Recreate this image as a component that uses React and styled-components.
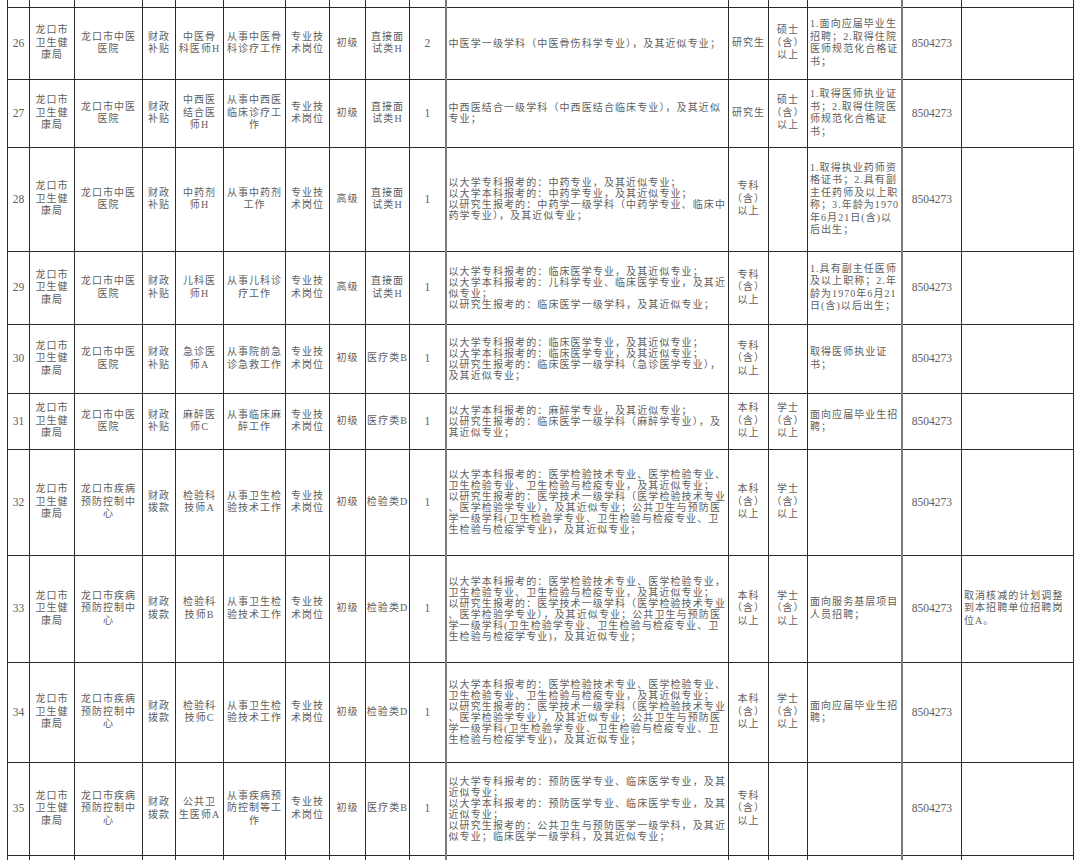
import React from 'react';
import styled, { createGlobalStyle } from 'styled-components';

const Global = createGlobalStyle`
  html, body {
    margin: 0;
    padding: 0;
    background: #fff;
    height: 860px;
    overflow: hidden;
  }
  body {
    font-family: "Liberation Serif", "Noto Sans CJK SC", serif;
  }
`;

const Page = styled.div`
  padding: 0 7px;
`;

const Table = styled.table`
  border-collapse: collapse;
  table-layout: fixed;
  width: 1066px;
  color: #5e5e5e;
  font-family: "Liberation Serif", "Noto Sans CJK SC", serif;
  font-size: 10px;
`;

const Col = styled.col`
  width: ${(p) => p.$w}px;
`;

const Row = styled.tr`
  height: ${(p) => p.$h}px;
`;

const Cell = styled.td`
  border: 1px solid #2b2b2b;
  ${(p) => p.$heavy && 'border-left: 2px solid #7a7a7a;'}
  ${(p) => p.$stubTop && 'border-top: none;'}
  ${(p) => p.$stubBottom && 'border-bottom: none;'}
  padding: 0 ${(p) => p.$pad || 0}px;
  text-align: ${(p) => p.$align || 'center'};
  vertical-align: middle;
  white-space: pre;
  overflow: hidden;
  line-height: ${(p) => p.$lh || 12.5}px;
  letter-spacing: ${(p) => (p.$num ? 0 : p.$ls || 1.05)}px;
  font-size: ${(p) => (p.$num ? 11.5 : 10)}px;
`;

const columns = [
  { key: 'n', w: 22, num: true },
  { key: 'dept', w: 45 },
  { key: 'unit', w: 68 },
  { key: 'fund', w: 33 },
  { key: 'post', w: 48 },
  { key: 'desc', w: 62 },
  { key: 'type', w: 44 },
  { key: 'level', w: 36 },
  { key: 'cat', w: 44 },
  { key: 'count', w: 36, num: true },
  { key: 'major', w: 283, align: 'left', pad: 2, lh: 11, ls: 1.1, heavy: true },
  { key: 'edu', w: 40 },
  { key: 'degree', w: 39 },
  { key: 'other', w: 94, align: 'left', pad: 2 },
  { key: 'phone', w: 60, num: true, heavy: true },
  { key: 'note', w: 112, align: 'left', pad: 2 },
];

const DEPT = '龙口市\n卫生健\n康局';
const ZY = '龙口市中医\n医院';
const JK = '龙口市疾病\n预防控制中\n心';
const BT = '财政\n补贴';
const BK = '财政\n拨款';
const ZJ = '专业技\n术岗位';
const ZK = '专科\n（含）\n以上';
const BKE = '本科\n（含）\n以上';
const XS = '学士\n（含）\n以上';
const SS = '硕士\n（含）\n以上';
const TEL = '8504273';

const jy = (sep) =>
  [
    `以大学本科报考的：医学检验技术专业、医学检验专业${sep}`,
    '卫生检验专业、卫生检验与检疫专业，及其近似专业；',
    '以研究生报考的：医学技术一级学科（医学检验技术专业',
    '、医学检验学专业），及其近似专业；公共卫生与预防医',
    '学一级学科(卫生检验学专业、卫生检验与检疫专业、卫',
    '生检验与检疫学专业)，及其近似专业；',
  ].join('\n');

const rows = [
  {
    h: 72, n: '26', dept: DEPT, unit: ZY, fund: BT, post: '中医骨\n科医师H', desc: '从事中医骨\n科诊疗工作',
    type: ZJ, level: '初级', cat: '直接面\n试类H', count: '2',
    major: '中医学一级学科（中医骨伤科学专业），及其近似专业；',
    edu: '研究生', degree: SS,
    other: '1.面向应届毕业生\n招聘；2.取得住院\n医师规范化合格证\n书；', phone: TEL, note: '',
  },
  {
    h: 68, n: '27', dept: DEPT, unit: ZY, fund: BT, post: '中西医\n结合医\n师H', desc: '从事中西医\n临床诊疗工\n作',
    type: ZJ, level: '初级', cat: '直接面\n试类H', count: '1',
    major: '中西医结合一级学科（中西医结合临床专业），及其近似\n专业；',
    edu: '研究生', degree: SS,
    other: '1.取得医师执业证\n书；2.取得住院医\n师规范化合格证\n书；', phone: TEL, note: '',
  },
  {
    h: 104, n: '28', dept: DEPT, unit: ZY, fund: BT, post: '中药剂\n师H', desc: '从事中药剂\n工作',
    type: ZJ, level: '高级', cat: '直接面\n试类H', count: '1',
    major:
      '以大学专科报考的：中药专业，及其近似专业；\n以大学本科报考的：中药学专业，及其近似专业；\n以研究生报考的：中药学一级学科（中药学专业、临床中\n药学专业），及其近似专业；',
    edu: ZK, degree: '',
    other: '1.取得执业药师资\n格证书；2.具有副\n主任药师及以上职\n称；3.年龄为1970\n年6月21日(含)以\n后出生；', phone: TEL, note: '',
  },
  {
    h: 73, n: '29', dept: DEPT, unit: ZY, fund: BT, post: '儿科医\n师H', desc: '从事儿科诊\n疗工作',
    type: ZJ, level: '高级', cat: '直接面\n试类H', count: '1',
    major:
      '以大学专科报考的：临床医学专业，及其近似专业；\n以大学本科报考的：儿科学专业、临床医学专业，及其近\n似专业；\n以研究生报考的：临床医学一级学科，及其近似专业；',
    edu: ZK, degree: '',
    other: '1.具有副主任医师\n及以上职称；2.年\n龄为1970年6月21\n日(含)以后出生；', phone: TEL, note: '',
  },
  {
    h: 69, n: '30', dept: DEPT, unit: ZY, fund: BT, post: '急诊医\n师A', desc: '从事院前急\n诊急救工作',
    type: ZJ, level: '初级', cat: '医疗类B', count: '1',
    major:
      '以大学专科报考的：临床医学专业，及其近似专业；\n以大学本科报考的：临床医学专业，及其近似专业；\n以研究生报考的：临床医学一级学科（急诊医学专业），\n及其近似专业；',
    edu: ZK, degree: '',
    other: '取得医师执业证\n书；', phone: TEL, note: '',
  },
  {
    h: 56, n: '31', dept: DEPT, unit: ZY, fund: BT, post: '麻醉医\n师C', desc: '从事临床麻\n醉工作',
    type: ZJ, level: '初级', cat: '医疗类B', count: '1',
    major:
      '以大学本科报考的：麻醉学专业，及其近似专业；\n以研究生报考的：临床医学一级学科（麻醉学专业），及\n其近似专业；',
    edu: BKE, degree: XS,
    other: '面向应届毕业生招\n聘；', phone: TEL, note: '',
  },
  {
    h: 106, n: '32', dept: DEPT, unit: JK, fund: BK, post: '检验科\n技师A', desc: '从事卫生检\n验技术工作',
    type: ZJ, level: '初级', cat: '检验类D', count: '1',
    major: jy('、'),
    edu: BKE, degree: XS,
    other: '', phone: TEL, note: '',
  },
  {
    h: 107, n: '33', dept: DEPT, unit: JK, fund: BK, post: '检验科\n技师B', desc: '从事卫生检\n验技术工作',
    type: ZJ, level: '初级', cat: '检验类D', count: '1',
    major: jy('，'),
    edu: BKE, degree: XS,
    other: '面向服务基层项目\n人员招聘；', phone: TEL,
    note: '取消核减的计划调整\n到本招聘单位招聘岗\n位A。',
  },
  {
    h: 100, n: '34', dept: DEPT, unit: JK, fund: BK, post: '检验科\n技师C', desc: '从事卫生检\n验技术工作',
    type: ZJ, level: '初级', cat: '检验类D', count: '1',
    major: jy('、'),
    edu: BKE, degree: XS,
    other: '面向应届毕业生招\n聘；', phone: TEL, note: '',
  },
  {
    h: 93, n: '35', dept: DEPT, unit: JK, fund: BK, post: '公共卫\n生医师A', desc: '从事疾病预\n防控制等工\n作',
    type: ZJ, level: '初级', cat: '医疗类B', count: '1',
    major:
      '以大学专科报考的：预防医学专业、临床医学专业，及其\n近似专业；\n以大学本科报考的：预防医学专业、临床医学专业，及其\n近似专业；\n以研究生报考的：公共卫生与预防医学一级学科，及其近\n似专业；临床医学一级学科，及其近似专业；',
    edu: ZK, degree: '',
    other: '', phone: TEL, note: '',
  },
];

function StubRow({ h, top, bottom }) {
  return (
    <Row $h={h}>
      {columns.map((c) => (
        <Cell key={c.key} $heavy={c.heavy} $stubTop={top} $stubBottom={bottom} />
      ))}
    </Row>
  );
}

export default function App() {
  return (
    <>
      <Global />
      <Page>
        <Table>
          <colgroup>
            {columns.map((c) => (
              <Col key={c.key} $w={c.w} />
            ))}
          </colgroup>
          <tbody>
            <StubRow h={7} top />
            {rows.map((r) => (
              <Row key={r.n} $h={r.h}>
                {columns.map((c) => (
                  <Cell
                    key={c.key}
                    $num={c.num}
                    $align={c.align}
                    $pad={c.pad}
                    $lh={c.lh}
                    $ls={c.ls}
                    $heavy={c.heavy}
                  >
                    {r[c.key]}
                  </Cell>
                ))}
              </Row>
            ))}
            <StubRow h={30} bottom />
          </tbody>
        </Table>
      </Page>
    </>
  );
}
